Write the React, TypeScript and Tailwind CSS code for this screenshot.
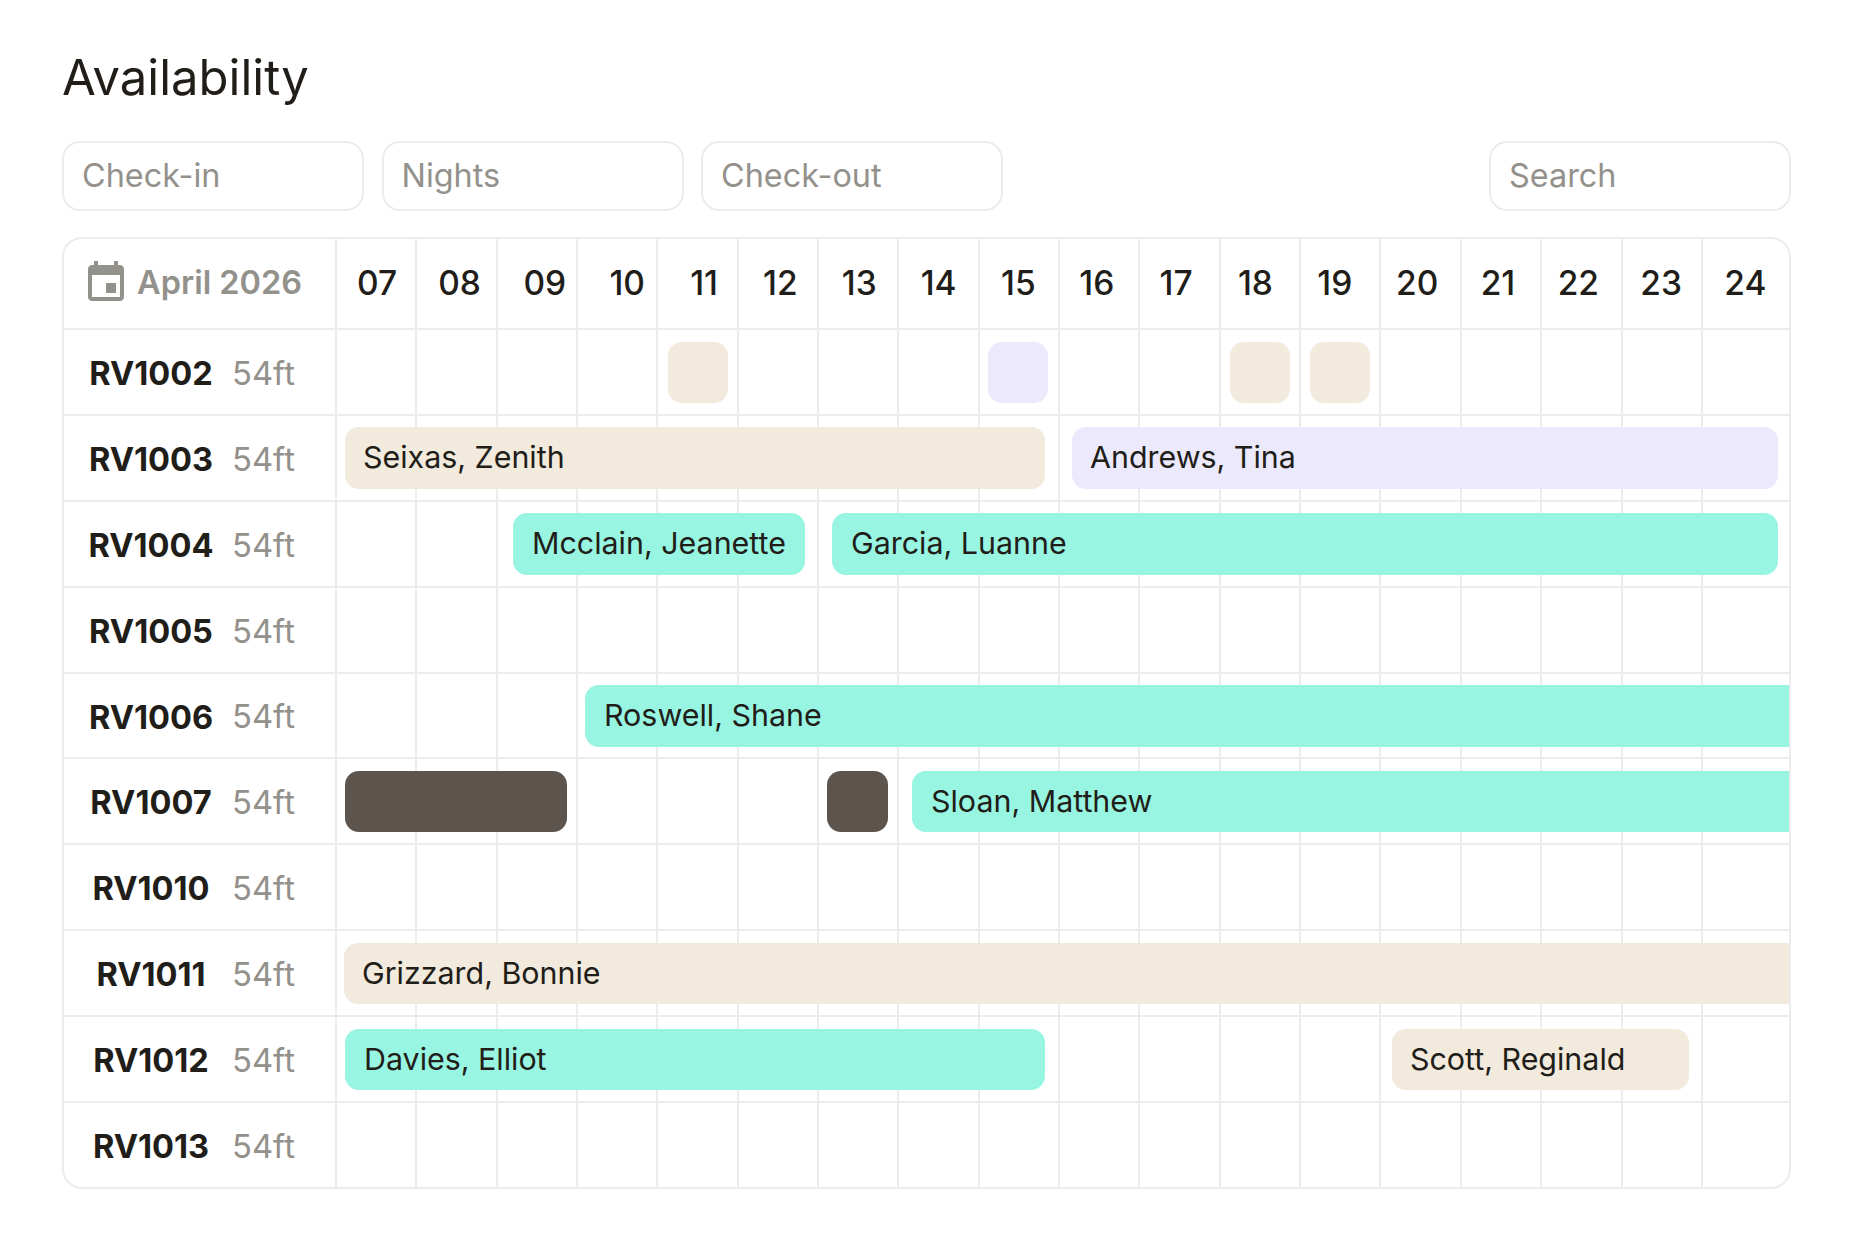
// header dates sit slightly off their column centres, offsets in px
const DAYS: [string, number][] = [
  ["07", 1], ["08", 3], ["09", 8], ["10", 10], ["11", 6.5], ["12", 2.5], ["13", 1], ["14", 0], ["15", -0.5],
  ["16", -2.5], ["17", -3.5], ["18", -4.5], ["19", -5.5], ["20", -3.5], ["21", -3], ["22", -3], ["23", -0.5], ["24", -0.5],
];

type Bar = { left: number; width: number; tone: "beige" | "lilac" | "mint" | "dark"; name?: string };

const ROWS: { id: string; bars: Bar[] }[] = [
  {
    id: "RV1002",
    bars: [
      { left: 333, width: 60, tone: "beige" },
      { left: 653, width: 60, tone: "lilac" },
      { left: 895, width: 60, tone: "beige" },
      { left: 975, width: 60, tone: "beige" },
    ],
  },
  {
    id: "RV1003",
    bars: [
      { left: 10, width: 700, tone: "beige", name: "Seixas, Zenith" },
      { left: 737, width: 706, tone: "lilac", name: "Andrews, Tina" },
    ],
  },
  {
    id: "RV1004",
    bars: [
      { left: 178, width: 292, tone: "mint", name: "Mcclain, Jeanette" },
      { left: 497, width: 946, tone: "mint", name: "Garcia, Luanne" },
    ],
  },
  { id: "RV1005", bars: [] },
  { id: "RV1006", bars: [{ left: 250, width: 1300, tone: "mint", name: "Roswell, Shane" }] },
  {
    id: "RV1007",
    bars: [
      { left: 10, width: 222, tone: "dark" },
      { left: 492, width: 61, tone: "dark" },
      { left: 577, width: 1000, tone: "mint", name: "Sloan, Matthew" },
    ],
  },
  { id: "RV1010", bars: [] },
  { id: "RV1011", bars: [{ left: 9, width: 1500, tone: "beige", name: "Grizzard, Bonnie" }] },
  {
    id: "RV1012",
    bars: [
      { left: 10, width: 700, tone: "mint", name: "Davies, Elliot" },
      { left: 1057, width: 297, tone: "beige", name: "Scott, Reginald" },
    ],
  },
  { id: "RV1013", bars: [] },
];

const TONES = {
  beige: "bg-[#f2eadc] pl-[18px]",
  lilac: "bg-[#ece9fc] pl-[18px]",
  mint: "bg-[#98f5e1] pl-[19px]",
  dark: "bg-[#5c544d]",
};

function Field({ placeholder }: { placeholder: string }) {
  return (
    <input
      placeholder={placeholder}
      className="h-[70px] w-[302px] rounded-[18px] border-2 border-[#ececec] bg-white px-[18px] pb-[2px] text-[32.4px] text-[#211d19] outline-none placeholder:text-[#93918c]"
    />
  );
}

function Cells() {
  return (
    <>
      {DAYS.map(([day], i) => (
        <div
          key={day}
          className={`h-full border-l-2 border-[#ececec] ${i === DAYS.length - 1 ? "flex-1" : "w-[80.35px] shrink-0"}`}
        />
      ))}
    </>
  );
}

export default function App() {
  return (
    <div className="min-h-[1260px] bg-white px-[62px] pt-[48px] font-['Inter',sans-serif] text-[#211d19]">
      <h1 className="text-[49px] leading-[60px] font-normal">Availability</h1>

      <div className="mt-[33px] flex gap-[17.5px]">
        <Field placeholder="Check-in" />
        <Field placeholder="Nights" />
        <Field placeholder="Check-out" />
        <div className="ml-auto">
          <Field placeholder="Search" />
        </div>
      </div>

      <div className="mt-[26px] overflow-hidden rounded-[20px] border-2 border-[#ececec]">
        <div className="flex h-[89px]">
          <div className="flex w-[271px] shrink-0 items-center pl-[18px] text-[#93918c]">
            <svg viewBox="0 0 24 24" className="mb-[2px] h-[48px] w-[48px] fill-current">
              <path d="M17 12h-5v5h5v-5zM16 1v2H8V1H6v2H5c-1.11 0-1.99.9-1.99 2L3 19c0 1.1.89 2 2 2h14c1.1 0 2-.9 2-2V5c0-1.1-.9-2-2-2h-1V1h-2zm3 18H5V8h14v11z" />
            </svg>
            <span className="ml-[7px] text-[32.5px] font-semibold">April 2026</span>
          </div>
          {DAYS.map(([day, offset], i) => (
            <div
              key={day}
              className={`flex items-center justify-center border-l-2 border-[#ececec] text-[33.5px] font-[550] ${
                i === DAYS.length - 1 ? "flex-1" : "w-[80.35px] shrink-0"
              }`}
            >
              <span style={{ marginLeft: offset * 2 }}>{day}</span>
            </div>
          ))}
        </div>

        {ROWS.map((row) => (
          <div key={row.id} className="flex h-[85.9px] border-t-2 border-[#ececec]">
            <div className="flex w-[271px] shrink-0 items-center pt-[3px]">
              <span className="w-[150px] pl-[24px] text-center text-[32.6px] font-bold whitespace-nowrap">{row.id}</span>
              <span className="ml-[18px] text-[32.8px] text-[#93918c]">54ft</span>
            </div>
            <div className="relative flex min-w-0 flex-1">
              <Cells />
              {row.bars.map((bar) => (
                <div
                  key={bar.left}
                  className={`absolute top-[11.5px] flex h-[61.5px] items-center rounded-[14px] text-[30.4px] whitespace-nowrap ${TONES[bar.tone]}`}
                  style={{ left: bar.left, width: bar.width }}
                >
                  {bar.name}
                </div>
              ))}
            </div>
          </div>
        ))}
      </div>
    </div>
  );
}
